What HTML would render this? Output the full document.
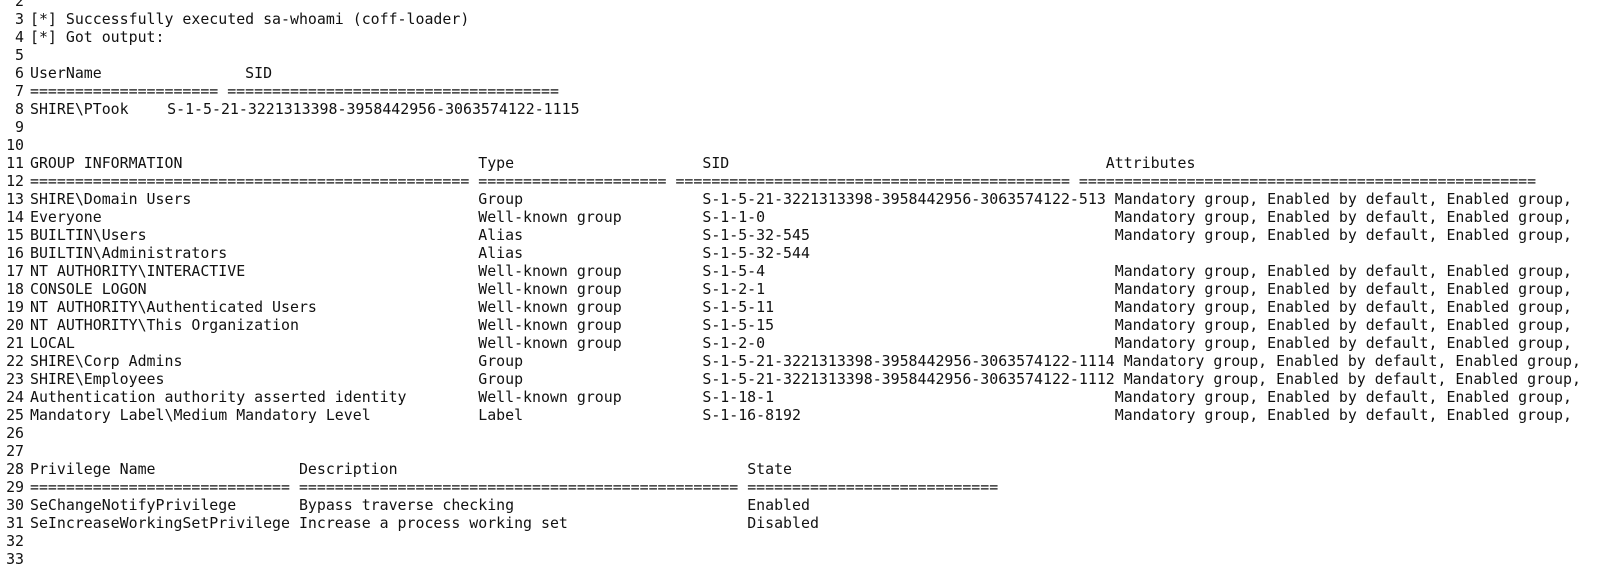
<!DOCTYPE html>
<html><head><meta charset="utf-8"><style>
html,body{margin:0;padding:0;background:#fff;}
body{width:1606px;height:565px;overflow:hidden;position:relative;font-family:"DejaVu Sans Mono","Liberation Mono",monospace;font-size:14.9px;color:#111;}
.l{position:absolute;left:30px;height:18px;line-height:18px;white-space:pre;width:1600px;}
.n{position:absolute;left:-30px;width:24px;text-align:right;font-style:normal;font-weight:normal;}
.l span{position:absolute;top:0;}
</style></head><body>
<div class="l" style="top:-8px"><i class="n">2</i></div>
<div class="l" style="top:10px"><i class="n">3</i><span style="left:0">[*] Successfully executed sa-whoami (coff-loader)</span></div>
<div class="l" style="top:28px"><i class="n">4</i><span style="left:0">[*] Got output:</span></div>
<div class="l" style="top:46px"><i class="n">5</i></div>
<div class="l" style="top:64px"><i class="n">6</i><span style="left:0">UserName</span><span style="left:24ch">SID</span></div>
<div class="l" style="top:82px"><i class="n">7</i><span style="left:0">=====================</span><span style="left:22ch">=====================================</span></div>
<div class="l" style="top:100px"><i class="n">8</i><span style="left:0">SHIRE\PTook</span><span style="left:15.3ch">S-1-5-21-3221313398-3958442956-3063574122-1115</span></div>
<div class="l" style="top:118px"><i class="n">9</i></div>
<div class="l" style="top:136px"><i class="n">10</i></div>
<div class="l" style="top:154px"><i class="n">11</i><span style="left:0">GROUP INFORMATION</span><span style="left:50ch">Type</span><span style="left:75ch">SID</span><span style="left:120ch">Attributes</span></div>
<div class="l" style="top:172px"><i class="n">12</i><span style="left:0">=================================================</span><span style="left:50ch">=====================</span><span style="left:72ch">============================================</span><span style="left:117ch">===================================================</span></div>
<div class="l" style="top:190px"><i class="n">13</i><span style="left:0">SHIRE\Domain Users</span><span style="left:50ch">Group</span><span style="left:75ch">S-1-5-21-3221313398-3958442956-3063574122-513</span><span style="left:121ch">Mandatory group, Enabled by default, Enabled group,</span></div>
<div class="l" style="top:208px"><i class="n">14</i><span style="left:0">Everyone</span><span style="left:50ch">Well-known group</span><span style="left:75ch">S-1-1-0</span><span style="left:121ch">Mandatory group, Enabled by default, Enabled group,</span></div>
<div class="l" style="top:226px"><i class="n">15</i><span style="left:0">BUILTIN\Users</span><span style="left:50ch">Alias</span><span style="left:75ch">S-1-5-32-545</span><span style="left:121ch">Mandatory group, Enabled by default, Enabled group,</span></div>
<div class="l" style="top:244px"><i class="n">16</i><span style="left:0">BUILTIN\Administrators</span><span style="left:50ch">Alias</span><span style="left:75ch">S-1-5-32-544</span></div>
<div class="l" style="top:262px"><i class="n">17</i><span style="left:0">NT AUTHORITY\INTERACTIVE</span><span style="left:50ch">Well-known group</span><span style="left:75ch">S-1-5-4</span><span style="left:121ch">Mandatory group, Enabled by default, Enabled group,</span></div>
<div class="l" style="top:280px"><i class="n">18</i><span style="left:0">CONSOLE LOGON</span><span style="left:50ch">Well-known group</span><span style="left:75ch">S-1-2-1</span><span style="left:121ch">Mandatory group, Enabled by default, Enabled group,</span></div>
<div class="l" style="top:298px"><i class="n">19</i><span style="left:0">NT AUTHORITY\Authenticated Users</span><span style="left:50ch">Well-known group</span><span style="left:75ch">S-1-5-11</span><span style="left:121ch">Mandatory group, Enabled by default, Enabled group,</span></div>
<div class="l" style="top:316px"><i class="n">20</i><span style="left:0">NT AUTHORITY\This Organization</span><span style="left:50ch">Well-known group</span><span style="left:75ch">S-1-5-15</span><span style="left:121ch">Mandatory group, Enabled by default, Enabled group,</span></div>
<div class="l" style="top:334px"><i class="n">21</i><span style="left:0">LOCAL</span><span style="left:50ch">Well-known group</span><span style="left:75ch">S-1-2-0</span><span style="left:121ch">Mandatory group, Enabled by default, Enabled group,</span></div>
<div class="l" style="top:352px"><i class="n">22</i><span style="left:0">SHIRE\Corp Admins</span><span style="left:50ch">Group</span><span style="left:75ch">S-1-5-21-3221313398-3958442956-3063574122-1114 Mandatory group, Enabled by default, Enabled group,</span></div>
<div class="l" style="top:370px"><i class="n">23</i><span style="left:0">SHIRE\Employees</span><span style="left:50ch">Group</span><span style="left:75ch">S-1-5-21-3221313398-3958442956-3063574122-1112 Mandatory group, Enabled by default, Enabled group,</span></div>
<div class="l" style="top:388px"><i class="n">24</i><span style="left:0">Authentication authority asserted identity</span><span style="left:50ch">Well-known group</span><span style="left:75ch">S-1-18-1</span><span style="left:121ch">Mandatory group, Enabled by default, Enabled group,</span></div>
<div class="l" style="top:406px"><i class="n">25</i><span style="left:0">Mandatory Label\Medium Mandatory Level</span><span style="left:50ch">Label</span><span style="left:75ch">S-1-16-8192</span><span style="left:121ch">Mandatory group, Enabled by default, Enabled group,</span></div>
<div class="l" style="top:424px"><i class="n">26</i></div>
<div class="l" style="top:442px"><i class="n">27</i></div>
<div class="l" style="top:460px"><i class="n">28</i><span style="left:0">Privilege Name</span><span style="left:30ch">Description</span><span style="left:80ch">State</span></div>
<div class="l" style="top:478px"><i class="n">29</i><span style="left:0">=============================</span><span style="left:30ch">=================================================</span><span style="left:80ch">============================</span></div>
<div class="l" style="top:496px"><i class="n">30</i><span style="left:0">SeChangeNotifyPrivilege</span><span style="left:30ch">Bypass traverse checking</span><span style="left:80ch">Enabled</span></div>
<div class="l" style="top:514px"><i class="n">31</i><span style="left:0">SeIncreaseWorkingSetPrivilege</span><span style="left:30ch">Increase a process working set</span><span style="left:80ch">Disabled</span></div>
<div class="l" style="top:532px"><i class="n">32</i></div>
<div class="l" style="top:550px"><i class="n">33</i></div>
</body></html>
